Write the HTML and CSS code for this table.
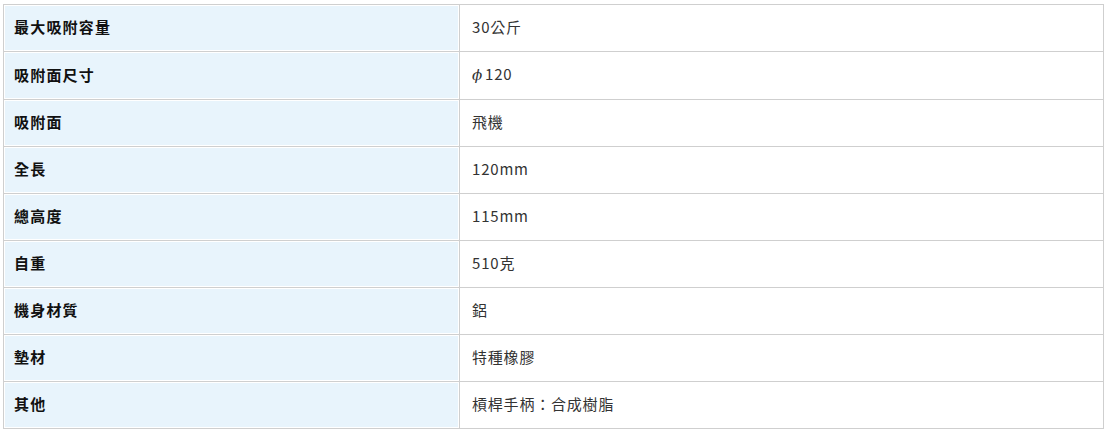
FILE: index.html
```html
<!DOCTYPE html>
<html lang="zh-Hant">
<head>
<meta charset="utf-8">
<link rel="stylesheet" href="styles.css">
</head>
<body>
<table class="spec">
  <tbody>
    <tr><th>最大吸附容量</th><td>30公斤</td></tr>
    <tr><th>吸附面尺寸</th><td><i class="phi">ϕ</i>120</td></tr>
    <tr><th>吸附面</th><td>飛機</td></tr>
    <tr><th>全長</th><td>120mm</td></tr>
    <tr><th>總高度</th><td>115mm</td></tr>
    <tr><th>自重</th><td>510克</td></tr>
    <tr><th>機身材質</th><td>鋁</td></tr>
    <tr><th>墊材</th><td>特種橡膠</td></tr>
    <tr><th>其他</th><td>槓桿手柄：合成樹脂</td></tr>
  </tbody>
</table>
</body>
</html>
```
FILE: styles.css
```css
html, body {
  margin: 0;
  padding: 0;
  background: #fff;
}
body {
  padding: 4px 3px 0 3px;
  font-family: "Noto Sans CJK TC", "Noto Sans", sans-serif;
  font-size: 15px;
  letter-spacing: 0.6px;
}
.spec {
  width: 1101px;
  border-collapse: collapse;
  table-layout: fixed;
}
.spec th,
.spec td {
  border: 1px solid #cfcfcf;
  padding: 12px 12px 14px 12px;
  line-height: 20px;
  text-align: left;
  vertical-align: middle;
}
.spec th {
  width: 433px;
  padding-left: 10px;
  background: #e8f4fc;
  box-shadow: inset 0 0 0 1px #fff;
  font-weight: bold;
  letter-spacing: 1.2px;
  color: #111;
}
.spec td {
  color: #333;
  letter-spacing: 0.8px;
}
.phi {
  font-family: "DejaVu Serif", serif;
  font-style: italic;
  margin-right: 2px;
}
```
